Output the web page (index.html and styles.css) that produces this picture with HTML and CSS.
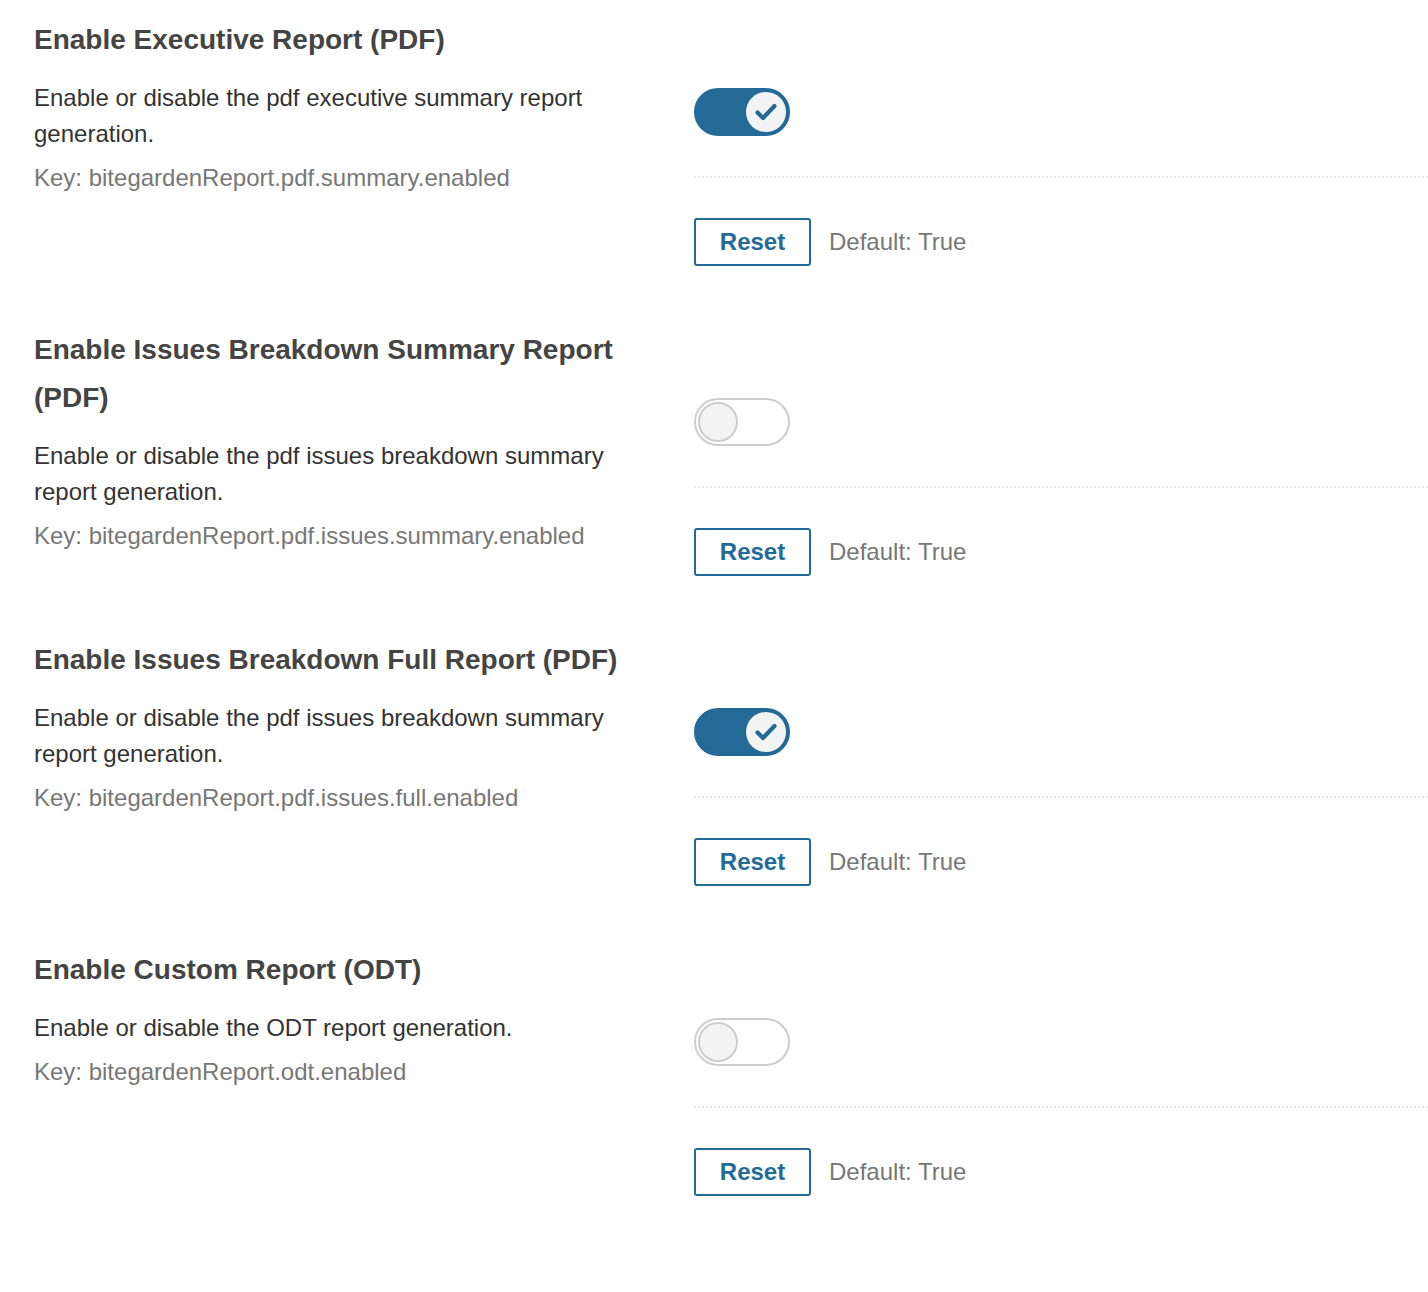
FILE: index.html
```html
<!DOCTYPE html>
<html>
<head>
<meta charset="utf-8">
<link rel="stylesheet" href="styles.css">
</head>
<body>
<div class="page">
  <div class="setting">
    <div class="left">
      <h3 class="title">Enable Executive Report (PDF)</h3>
      <div class="desc">Enable or disable the pdf executive summary report generation.</div>
      <div class="key">Key: bitegardenReport.pdf.summary.enabled</div>
    </div>
    <div class="right">
      <div class="toggle on"><span class="knob"><svg viewBox="0 0 40 40" width="40" height="40"><path d="M11.5 20.5 L17 26 L28.5 14" fill="none" stroke="#236a97" stroke-width="4.2" stroke-linecap="round" stroke-linejoin="round"/></svg></span></div>
      <div class="changes">
        <button class="reset">Reset</button>
        <span class="default">Default: True</span>
      </div>
    </div>
  </div>
  <div class="setting">
    <div class="left">
      <h3 class="title">Enable Issues Breakdown Summary Report (PDF)</h3>
      <div class="desc">Enable or disable the pdf issues breakdown summary report generation.</div>
      <div class="key">Key: bitegardenReport.pdf.issues.summary.enabled</div>
    </div>
    <div class="right">
      <div class="toggle off"><span class="knob"></span></div>
      <div class="changes">
        <button class="reset">Reset</button>
        <span class="default">Default: True</span>
      </div>
    </div>
  </div>
  <div class="setting">
    <div class="left">
      <h3 class="title">Enable Issues Breakdown Full Report (PDF)</h3>
      <div class="desc">Enable or disable the pdf issues breakdown summary report generation.</div>
      <div class="key">Key: bitegardenReport.pdf.issues.full.enabled</div>
    </div>
    <div class="right">
      <div class="toggle on"><span class="knob"><svg viewBox="0 0 40 40" width="40" height="40"><path d="M11.5 20.5 L17 26 L28.5 14" fill="none" stroke="#236a97" stroke-width="4.2" stroke-linecap="round" stroke-linejoin="round"/></svg></span></div>
      <div class="changes">
        <button class="reset">Reset</button>
        <span class="default">Default: True</span>
      </div>
    </div>
  </div>
  <div class="setting">
    <div class="left">
      <h3 class="title">Enable Custom Report (ODT)</h3>
      <div class="desc">Enable or disable the ODT report generation.</div>
      <div class="key">Key: bitegardenReport.odt.enabled</div>
    </div>
    <div class="right">
      <div class="toggle off"><span class="knob"></span></div>
      <div class="changes">
        <button class="reset">Reset</button>
        <span class="default">Default: True</span>
      </div>
    </div>
  </div>
</div>
</body>
</html>
```
FILE: styles.css
```css
html, body {
  margin: 0;
  padding: 0;
  background: #fff;
}
body {
  font-family: "Liberation Sans", Arial, Helvetica, sans-serif;
  color: #333;
}
.page {
  padding: 16px 0 0 34px;
}
.setting {
  display: flex;
  padding-bottom: 60px;
}
.left {
  width: 620px;
  flex: none;
  margin-right: 40px;
}
.title {
  margin: 0;
  font-size: 28px;
  line-height: 48px;
  font-weight: bold;
  color: #444;
}
.desc {
  margin-top: 16px;
  font-size: 24px;
  line-height: 36px;
  color: #333;
}
.key {
  margin-top: 8px;
  font-size: 24px;
  line-height: 36px;
  color: #777;
}
.right {
  flex: 1;
  padding-top: 72px;
}
.toggle {
  position: relative;
  width: 96px;
  height: 48px;
  border-radius: 24px;
  box-sizing: border-box;
}
.toggle.on {
  background: #236a97;
  border: 2px solid #236a97;
}
.toggle.off {
  background: #fff;
  border: 2px solid #cdcdcd;
}
.knob {
  position: absolute;
  top: 2px;
  width: 40px;
  height: 40px;
  border-radius: 50%;
  box-sizing: border-box;
  display: flex;
  align-items: center;
  justify-content: center;
}
.toggle.on .knob {
  right: 2px;
  background: #f3f3f3;
}
.toggle.off .knob {
  left: 2px;
  background: #f3f3f3;
  border: 2px solid #cdcdcd;
}
.changes {
  margin-top: 40px;
  border-top: 2px dotted #e6e6e6;
  padding-top: 40px;
  display: flex;
  align-items: center;
}
.reset {
  width: 117px;
  height: 48px;
  box-sizing: border-box;
  border: 2px solid #236a97;
  border-radius: 3px;
  background: #fff;
  color: #236a97;
  font-family: "Liberation Sans", Arial, sans-serif;
  font-weight: bold;
  font-size: 24px;
  padding: 0;
  cursor: pointer;
}
.default {
  margin-left: 18px;
  font-size: 24px;
  color: #777;
}
```
